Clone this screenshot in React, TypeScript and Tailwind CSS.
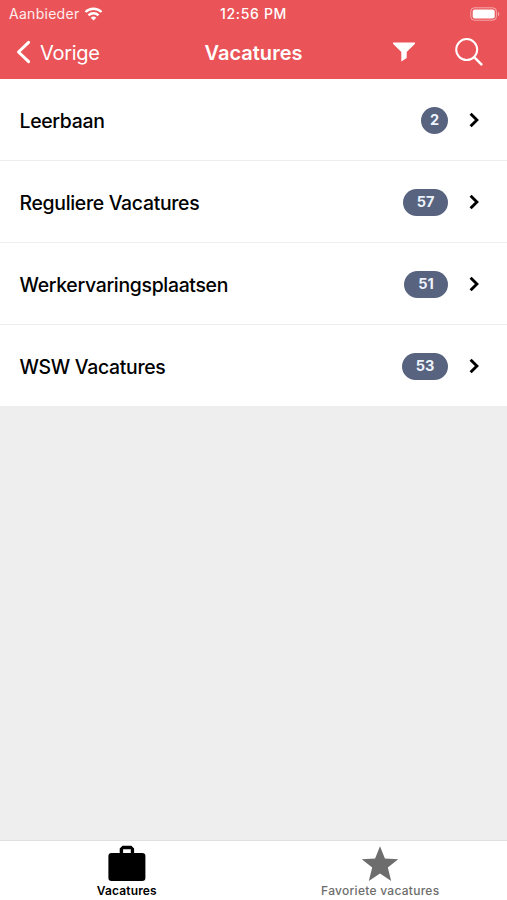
import React from 'react';

const categories = [
  { title: 'Leerbaan', count: 2, badge: 'w-[27px]' },
  { title: 'Reguliere Vacatures', count: 57, badge: 'w-[45px]' },
  { title: 'Werkervaringsplaatsen', count: 51, badge: 'w-11' },
  { title: 'WSW Vacatures', count: 53, badge: 'w-[46px]' }
];

function StatusBar() {
  return (
    <div className="grid h-[27px] grid-cols-3 items-center pl-[9px] pr-[7px] text-[14px] leading-none">
      <div className="flex items-center gap-[5px]">
        <span className="tracking-[0.28px] text-white/90">Aanbieder</span>
        <svg width="19" height="14" viewBox="0 0 18 14" fill="none" stroke="currentColor" strokeWidth="2.4">
          <path d="M1 5a11.4 11.4 0 0 1 16 0" />
          <path d="M4 8.3a7.1 7.1 0 0 1 10 0" />
          <path d="M9 13.6 6.2 10.8a4 4 0 0 1 5.6 0Z" fill="currentColor" stroke="none" />
        </svg>
      </div>
      <span className="-ml-[2px] text-center font-medium tracking-[0.68px] whitespace-nowrap">12:56 PM</span>
      <svg className="justify-self-end" width="30" height="14" viewBox="0 0 30 14">
        <rect x="0.8" y="0.8" width="25.6" height="12.4" rx="3.6" fill="none" stroke="#fff" strokeOpacity="0.5" />
        <rect x="2.7" y="2.5" width="22" height="9" rx="2" fill="#fff" />
        <path d="M28 4.8c1.8.7 1.8 3.7 0 4.4Z" fill="#fff" fillOpacity="0.5" />
      </svg>
    </div>
  );
}

function NavBar() {
  return (
    <div className="grid h-[52px] grid-cols-3 items-center pl-4 pr-6 pb-[2px]">
      <button className="flex items-center gap-[9px] text-left">
        <svg width="15" height="24" viewBox="0 0 15 24" fill="none" stroke="currentColor" strokeWidth="3" strokeLinecap="round" strokeLinejoin="round">
          <path d="M12.6 2.3 2.5 12l10.1 9.7" />
        </svg>
        <span className="pt-px text-[20px] leading-6 tracking-[-0.3px]">Vorige</span>
      </button>
      <h1 className="pl-2 pt-px text-center text-[20px] font-semibold leading-6 tracking-[0.02px] whitespace-nowrap">Vacatures</h1>
      <div className="flex items-center justify-end gap-10">
        <svg width="22" height="20" viewBox="0 0 22 20" fill="currentColor">
          <path d="M0 .5h22v1.2L13.7 10v6L8.3 19.5V10L0 1.7Z" />
        </svg>
        <svg width="28" height="28" viewBox="0 0 28 28" fill="none" stroke="currentColor" strokeWidth="2" strokeLinecap="round">
          <circle cx="11.7" cy="11.6" r="10.5" />
          <path d="m19.4 19.3 7 7" strokeWidth="2.5" />
        </svg>
      </div>
    </div>
  );
}

export default function App() {
  return (
    <div className="flex h-[900px] w-full flex-col bg-[#eeeeee] font-['Inter','Liberation_Sans',sans-serif] text-black">
      <header className="h-[79px] shrink-0 bg-[#ea5357] text-white">
        <StatusBar />
        <NavBar />
      </header>

      <main className="flex-1">
        {categories.map((category) => (
          <div
            key={category.title}
            className="flex h-[82px] items-center border-b border-[#eeeeee] bg-white pl-[19.5px] pr-[26px] pt-px"
          >
            <span className="flex-1 pt-px text-[19.4px] font-medium leading-6 tracking-[-0.3px]">{category.title}</span>
            <span className={`flex h-[27px] items-center justify-center rounded-full bg-[#586380] text-[14.5px] font-bold text-[#edf3fc] ${category.badge}`}>
              {category.count}
            </span>
            <svg className="ml-5" width="13" height="18" viewBox="0 0 13 18" fill="none" stroke="currentColor" strokeWidth="2.9">
              <path d="m2.6 2.7 6.3 6.3-6.3 6.3" />
            </svg>
          </div>
        ))}
      </main>

      <nav className="grid h-[60px] shrink-0 grid-cols-2 border-t border-[#dfdfdf] bg-white text-[12px] leading-4">
        <button className="flex flex-col items-center pt-1">
          <svg width="38" height="38" viewBox="0 0 38 38" fill="currentColor">
            <path fillRule="evenodd" d="M14.5.8h8.8l2.8 2.8v4.3h8.1a3.2 3.2 0 0 1 3.2 3.2v21.7a3.2 3.2 0 0 1-3.2 3.2H3.6a3.2 3.2 0 0 1-3.2-3.2V11.1a3.2 3.2 0 0 1 3.2-3.2h8.1V3.6ZM15.1 4.3v3.6h7.7V4.3Z" />
          </svg>
          <span className="font-semibold tracking-[0.15px]">Vacatures</span>
        </button>
        <button className="flex flex-col items-center pt-1 text-[#6d6d6d]">
          <svg width="38" height="38" viewBox="0 0 38 38" fill="currentColor">
            <path d="m19 1.3 4.9 12.2 13.3.7-10.4 8.3 3.4 13.4L19 28.5 7.8 35.9l3.4-13.4L.8 14.2l13.3-.7Z" />
          </svg>
          <span className="font-medium tracking-[0.27px]">Favoriete vacatures</span>
        </button>
      </nav>
    </div>
  );
}
